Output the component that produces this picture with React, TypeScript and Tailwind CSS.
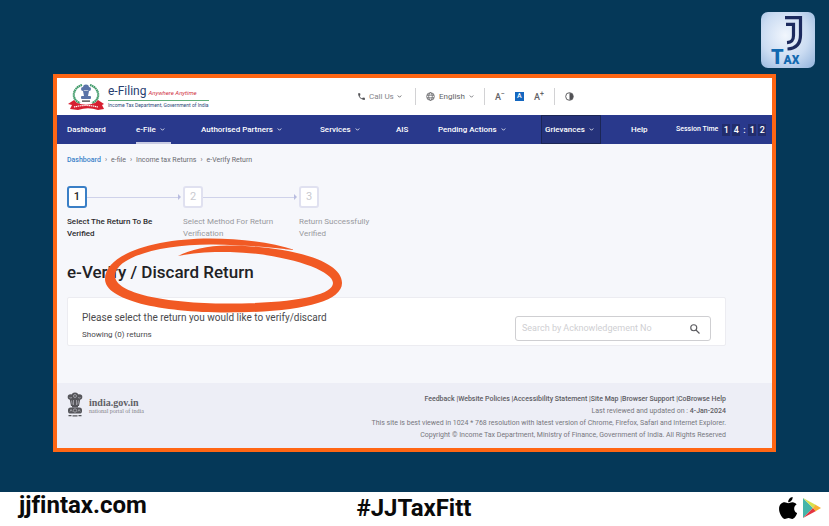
import React from "react";

function Chevron({ className = "" }: { className?: string }) {
  return (
    <svg viewBox="0 0 10 10" className={`size-[5px] shrink-0 ${className}`} fill="none" stroke="currentColor" strokeWidth="1.6" aria-hidden="true">
      <path d="M1.5 3 5 6.5 8.5 3" />
    </svg>
  );
}

function JJTaxLogo() {
  return (
    <svg viewBox="0 0 54 56" className="h-14 w-[54px]" role="img" aria-label="JJ Tax">
      <defs>
        <radialGradient id="badge" cx="45%" cy="42%" r="72%">
          <stop offset="0" stopColor="#f1f6fd" />
          <stop offset="0.6" stopColor="#cbdcf2" />
          <stop offset="1" stopColor="#9dbbe0" />
        </radialGradient>
      </defs>
      <rect width="54" height="56" rx="7" fill="url(#badge)" />
      <g fill="none" stroke="#1c2a5e" strokeWidth="3.2">
        <path d="M24 5.700H39.500V23C39.500 31 36 36.500 26.500 37" />
        <path d="M25 12.300H32.500V23.500C32.500 28 31 30.300 26 30.600" />
      </g>
      <g fill="#1269b0" fontFamily="Roboto, sans-serif" fontWeight="900">
        <text x="10" y="52" fontSize="20">T</text>
        <text x="22.500" y="52" fontSize="12">AX</text>
      </g>
    </svg>
  );
}

function EFilingEmblem() {
  return (
    <svg viewBox="0 0 38 28" className="h-7 w-[38px]" role="img" aria-label="Income Tax Department emblem">
      <g fill="none" stroke="#3f9a68" strokeWidth="2.200" strokeDasharray="1.600 .4">
        <path d="M15 2C5 5 4 17 13 20" />
        <path d="M23 2C33 5 34 17 25 20" />
      </g>
      <g fill="#5a73a8">
        <circle cx="19" cy="4.500" r="3" />
        <circle cx="16" cy="6" r="2" />
        <circle cx="22" cy="6" r="2" />
        <path d="M16 8h6l-1 5h-4z" />
        <rect x="14" y="13" width="10" height="3" rx="1" />
      </g>
      <path d="M15 17.500h8v1.200h-8z" fill="#333" />
      <path d="M1 21 7 17l3 3q9 3.500 18 0l3-3 6 4-2 1 2 4-6 1q-10-3.500-20 0l-8-1 2-4z" fill="#d71f30" />
      <path d="M7 24q12-3 24 0" fill="none" stroke="#fff" strokeWidth="1.200" strokeDasharray="1.300 .6" />
    </svg>
  );
}

function StateEmblem() {
  return (
    <svg viewBox="0 0 16 26" className="h-[26px] w-4" role="img" aria-label="State emblem of India">
      <g fill="#55555a">
        <circle cx="8" cy="4" r="3.600" />
        <circle cx="3.500" cy="5" r="2.800" />
        <circle cx="12.500" cy="5" r="2.800" />
        <path d="M2.500 6h11l-1.500 8H4z" />
        <rect x="1" y="15.500" width="14" height="6" rx="2.600" />
        <path d="M5 13.500h6v2H5zM1.500 23h3v1.300h-3zM5.500 23.300h5v1.200h-5zM11.500 23h3v1.300h-3z" />
      </g>
      <g fill="none" stroke="#c9c9d0" strokeWidth=".6">
        <circle cx="8" cy="4" r="1.500" />
        <path d="M2.500 5.500q1.500 1 2.500 0M11 5.500q1.500 1 2.500 0M6.500 8v5M9.500 8v5M4.500 8.500l.7 4M11.500 8.500l-.7 4" />
        <circle cx="8" cy="18.500" r="1.700" />
        <path d="M3 19.500l1-2 1.300 2M11 19.500l1-2 1.300 2" />
      </g>
    </svg>
  );
}

function Divider() {
  return <span className="h-[17px] w-px bg-[#d2d2d4]" />;
}

function TopBar() {
  return (
    <header className="flex h-[37px] items-center bg-white pl-[10px] text-[#626266]">
      <div className="flex w-[290px] items-center gap-[3px]">
        <EFilingEmblem />
        <div>
          <div className="flex items-baseline gap-[2px] border-b border-[#5fae7a] leading-[14px]">
            <span className="text-[12px] text-[#27406f]">e-Filing</span>
            <span className="text-[6px] text-[#d0313f] italic">Anywhere Anytime</span>
          </div>
          <div className="text-[5px] leading-[9px] whitespace-nowrap text-[#2c4a78]">Income Tax Department, Government of India</div>
        </div>
      </div>
      <div className="flex items-center gap-[10px]">
        <button className="flex w-12 items-center gap-[3px] text-[8px] whitespace-nowrap text-[#85858a]">
          <svg viewBox="0 0 24 24" className="size-[9px] shrink-0" fill="#505054" aria-hidden="true">
            <path d="M20 15.500c-1.200 0-2.500-.2-3.600-.6-.3-.1-.7 0-1 .2l-2.200 2.200a15 15 0 0 1-6.600-6.600L8.800 8.500c.3-.3.4-.7.2-1C8.700 6.400 8.500 5.200 8.500 4c0-.5-.4-1-1-1H4c-.5 0-1 .5-1 1 0 9.400 7.600 17 17 17 .5 0 1-.5 1-1v-3.500c0-.5-.5-1-1-1z" />
          </svg>
          Call Us <Chevron className="text-[#505054]" />
        </button>
        <Divider />
        <button className="flex w-12 items-center gap-1 text-[8px] whitespace-nowrap">
          <svg viewBox="0 0 20 20" className="size-[9px] shrink-0" fill="none" stroke="currentColor" strokeWidth="1.800" aria-hidden="true">
            <circle cx="10" cy="10" r="8.500" />
            <ellipse cx="10" cy="10" rx="4" ry="8.500" />
            <path d="M2 7h16M2 13h16" />
          </svg>
          English <Chevron />
        </button>
        <Divider />
        <div className="flex items-center gap-[10px] text-[9px] leading-[10px] font-medium">
          <button aria-label="Decrease text size">A<sup className="text-[7px]">−</sup></button>
          <button aria-label="Default text size" className="size-[9px] bg-[#1467c0] text-[7px] leading-[9px] text-white">A</button>
          <button aria-label="Increase text size">A<sup className="text-[7px]">+</sup></button>
        </div>
        <Divider />
        <button aria-label="Contrast">
          <svg viewBox="0 0 20 20" className="size-[9px]" aria-hidden="true">
            <circle cx="10" cy="10" r="8.500" fill="none" stroke="#505054" strokeWidth="2" />
            <path d="M10 2a8 8 0 0 1 0 16z" fill="#505054" />
          </svg>
        </button>
      </div>
    </header>
  );
}

function NavItem({ label, menu = false }: { label: string; menu?: boolean }) {
  return (
    <a href="#" className="flex items-center gap-1 whitespace-nowrap">
      {label}
      {menu && <Chevron />}
    </a>
  );
}

function Nav() {
  return (
    <nav className="grid h-[29px] grid-cols-[69fr_65fr_119fr_76fr_42fr_103fr_90fr_45fr_96fr] items-stretch bg-[#29398c] pl-[10px] text-[8px] font-medium text-white">
      <NavItem label="Dashboard" />
      <div className="flex">
        <a href="#" className="flex w-[35px] items-center gap-1 border-y-2 border-t-transparent border-b-[#c8cbe2] whitespace-nowrap">
          e-File <Chevron />
        </a>
      </div>
      <NavItem label="Authorised Partners" menu />
      <NavItem label="Services" menu />
      <NavItem label="AIS" />
      <NavItem label="Pending Actions" menu />
      <div className="flex">
        <a href="#" className="flex w-[60px] items-center gap-1 border border-[#1b2656] bg-[#25327a] px-[3px] whitespace-nowrap">
          Grievances <Chevron />
        </a>
      </div>
      <NavItem label="Help" />
      <div className="flex items-center gap-[4px] text-[7px] whitespace-nowrap">
        Session Time
        <span className="flex items-center gap-[2px] text-center text-[9px] leading-[12px]">
          <span className="w-2 bg-[#222d6c]">1</span>
          <span className="w-2 bg-[#222d6c]">4</span>
          <span className="w-1">:</span>
          <span className="w-2 bg-[#222d6c]">1</span>
          <span className="w-2 bg-[#222d6c]">2</span>
        </span>
      </div>
    </nav>
  );
}

function Step({ n, label, active = false, last = false }: { n: number; label: string; active?: boolean; last?: boolean }) {
  return (
    <li className="w-[116px]">
      <div className="flex items-center">
        <span
          className={`flex h-[22px] w-5 items-center justify-center rounded-[3px] border-2 bg-white text-[11px] ${
            active ? "border-[#3a7fc6] font-medium text-[#222]" : "border-[#e0e1f0] text-[#c9cad0]"
          }`}
        >
          {n}
        </span>
        {!last && (
          <>
            <span className="h-px flex-1 bg-[#cfd2ea]" />
            <svg viewBox="0 0 3 6" className="mr-[2px] h-[6px] w-[3px]" fill="#b9bde0" aria-hidden="true">
              <path d="M0 0 3 3 0 6z" />
            </svg>
          </>
        )}
      </div>
      <p className={`mt-2 w-24 text-[8px] leading-[12px] ${active ? "font-medium text-[#2b2b2e]" : "text-[#98999e]"}`}>{label}</p>
    </li>
  );
}

function Title() {
  return (
    <div className="relative mt-[21px]">
      <h1 className="text-[17px] leading-[22px] font-medium text-[#222225]">e-Verify / Discard Return</h1>
      <svg viewBox="0 0 237 75" className="pointer-events-none absolute -top-[23px] left-[38px] z-10 h-[75px] w-[237px]" fill="#f15a24" aria-hidden="true">
        <path d="M190 12C165 4 135 .5 105 .5 50 .5 0 16 0 41c0 21 55 33.500 122 33.500 68 0 115-9.500 115-29.500C237 20 175 7.500 122 7.500c-19 0-37 4.500-49 10.500 17-3.500 32-4.500 52-4 55 1.500 103 18 103 31 0 13-43 20.500-106 20.500C60 65.500 10 55 10 38 10 18 60 6 108 6.500c32 .5 57 2.500 82 5.500z" />
      </svg>
    </div>
  );
}

function SearchCard() {
  return (
    <section className="mt-[14px] mr-[46px] flex h-[49px] justify-between rounded-[2px] border border-[#ececf1] bg-white px-[14px]">
      <div className="pt-[14px] text-[#4a4a4d]">
        <p className="text-[10px] leading-[12px]">Please select the return you would like to verify/discard</p>
        <p className="mt-[5px] text-[8px] leading-[12px]">Showing (0) returns</p>
      </div>
      <label className="mt-[18px] flex h-[25px] w-[196px] items-center rounded-[3px] border border-[#cfcfd2] bg-white pr-[9px] pl-[6px]">
        <input
          aria-label="Search by Acknowledgement No"
          placeholder="Search by Acknowledgement No"
          className="min-w-0 flex-1 bg-transparent text-[9px] text-[#444] outline-none placeholder:text-[#cfcfd3]"
        />
        <svg viewBox="0 0 24 24" className="size-3" fill="none" stroke="#5a5a5e" strokeWidth="2.300" aria-hidden="true">
          <circle cx="9.500" cy="9.500" r="6" />
          <path d="m14 14 7 7" />
        </svg>
      </label>
    </section>
  );
}

const footerLinks = ["Feedback ", "Website Policies ", "Accessibility Statement ", "Site Map ", "Browser Support ", "CoBrowse Help"];

function Footer() {
  return (
    <footer className="mt-[37px] flex h-[65px] justify-between bg-[#edeef6] pr-[46px] pl-[10px]">
      <div className="flex items-start gap-[6px] pt-[9px]">
        <StateEmblem />
        <div className="pt-[5px] font-['Liberation_Serif',serif]">
          <div className="text-[10px] leading-[11px] font-bold text-[#606065]">india.gov.in</div>
          <div className="text-[6px] leading-[7px] text-[#808086]">national portal of india</div>
        </div>
      </div>
      <div className="pt-[10px] text-right text-[7px] leading-[12px] whitespace-nowrap text-[#77777d]">
        <div className="font-medium text-[#5d5d63]">
          {footerLinks.map((t, i) => (
            <React.Fragment key={t}>
              {i > 0 && "|"}
              <a href="#">{t}</a>
            </React.Fragment>
          ))}
        </div>
        <p>
          Last reviewed and updated on : <span className="font-medium text-[#5d5d63]">4-Jan-2024</span>
        </p>
        <p>This site is best viewed in 1024 * 768 resolution with latest version of Chrome, Firefox, Safari and Internet Explorer.</p>
        <p>Copyright © Income Tax Department, Ministry of Finance, Government of India. All Rights Reserved</p>
      </div>
    </footer>
  );
}

export default function App() {
  return (
    <div className="flex min-h-screen flex-col bg-[#053858] font-['Roboto',sans-serif]">
      <div className="flex justify-end pt-3 pr-[14px]">
        <JJTaxLogo />
      </div>
      <main className="mx-[53px] mt-[6px] mb-10 border-4 border-[#ff6614] bg-[#f6f7fb]">
        <TopBar />
        <Nav />
        <div className="pl-[10px]">
          <div className="flex gap-1 pt-[10px] text-[7px] leading-[12px] text-[#6a6a70]">
            <a href="#" className="font-medium text-[#3b82c9]">Dashboard</a>
            <span>›</span>
            <a href="#">e-file</a>
            <span>›</span>
            <a href="#">Income tax Returns</a>
            <span>›</span>
            <span>e-Verify Return</span>
          </div>
          <ol className="mt-5 flex">
            <Step n={1} label="Select The Return To Be Verified" active />
            <Step n={2} label="Select Method For Return Verification" />
            <Step n={3} label="Return Successfully Verified" last />
          </ol>
          <Title />
          <SearchCard />
        </div>
        <Footer />
      </main>
      <div className="mt-auto grid h-[34px] grid-cols-3 items-center bg-white pr-2 pb-[2px] pl-[19px] text-[24px] leading-[24px] font-bold text-[#0a0a0a] [font-variant-ligatures:none]">
        <a href="#" className="justify-self-start pb-[6px]">jjfintax.com</a>
        <span className="justify-self-center pr-3">#JJTaxFitt</span>
        <span className="flex items-center gap-[6px] justify-self-end">
          <svg viewBox="3 31 374 449" className="h-[22px] w-[18px]" preserveAspectRatio="none" role="img" aria-label="Apple">
            <path d="M318.700 268.700c-.2-36.700 16.400-64.400 50-84.800-18.800-26.900-47.200-41.700-84.700-44.600-35.500-2.800-74.300 20.700-88.500 20.700-15 0-49.400-19.700-76.400-19.700C63.300 141.200 4 184.800 4 273.500q0 39.300 14.400 81.200c12.800 36.700 59 126.700 107.200 125.200 25.200-.6 43-17.900 75.800-17.900 31.800 0 48.300 17.900 76.400 17.900 48.600-.7 90.400-82.500 102.600-119.300-65.200-30.700-61.700-90-61.700-91.900zm-56.600-164.200c27.300-32.400 24.800-61.900 24-72.500-24.100 1.400-52 16.400-67.900 34.900-17.500 19.800-27.800 44.300-25.600 71.900 26.100 2 49.900-11.400 69.500-34.300z" />
          </svg>
          <svg viewBox="0 0 18 20" className="h-5 w-[18px]" role="img" aria-label="Google Play">
            <path d="M0 0v20l10-10z" fill="#45b5aa" />
            <path d="M0 0l13 7-3 3z" fill="#d8e04e" />
            <path d="M0 20l13-7-3-3z" fill="#e4343f" />
            <path d="M12.500 6.700 18 10l-5.500 3.300L10 10z" fill="#f8b133" />
          </svg>
        </span>
      </div>
    </div>
  );
}
